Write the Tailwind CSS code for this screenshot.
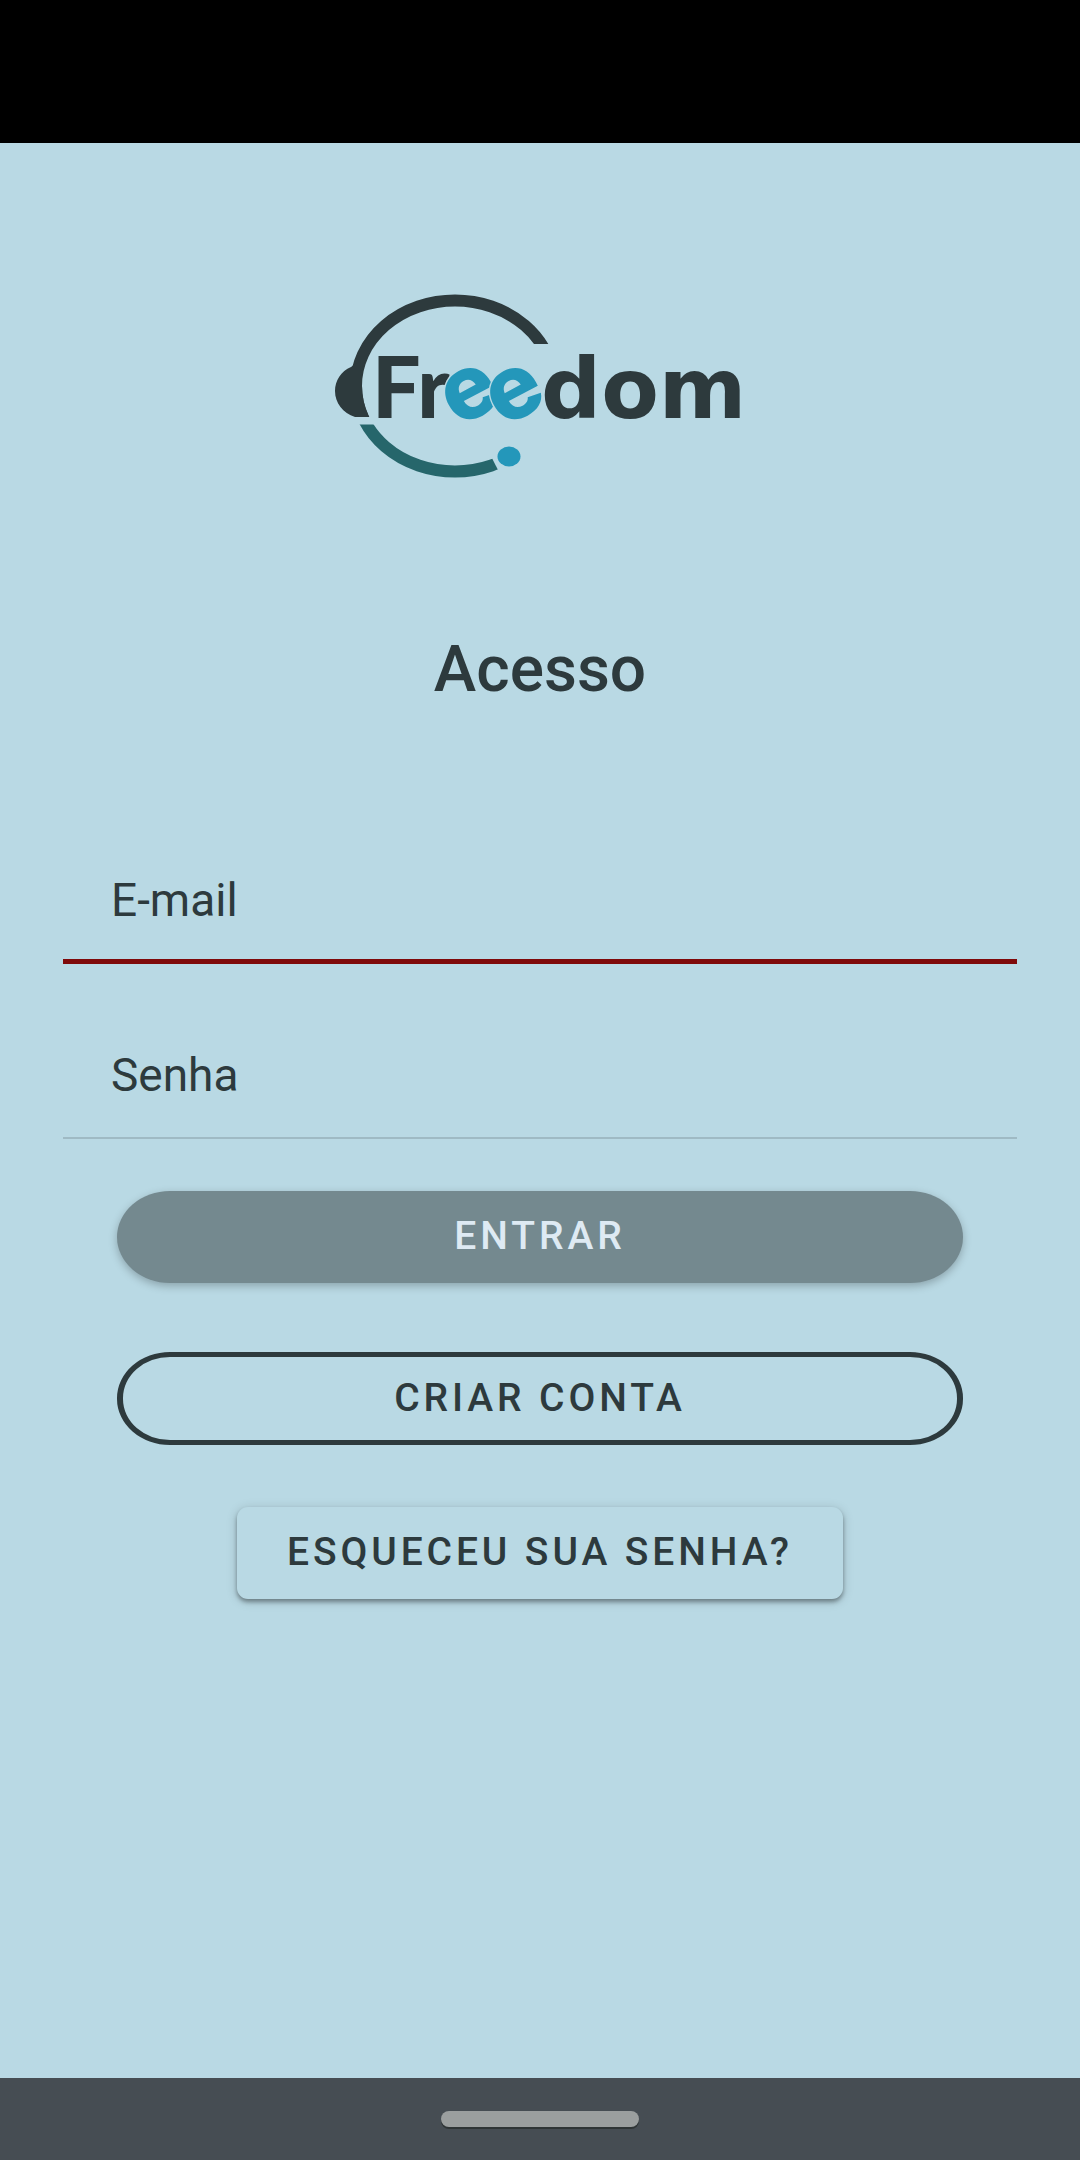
<!DOCTYPE html>
<html lang="pt-BR">
<head>
  <meta charset="UTF-8" />
  <meta name="viewport" content="width=device-width, initial-scale=1.0"/>
  <title>Freedom - Acesso</title>
  <script src="https://cdn.jsdelivr.net/npm/@tailwindcss/browser@4"></script>
</head>
<body class="min-h-screen flex flex-col bg-[#b9d9e4] text-[#2d3a3d] font-['Roboto',sans-serif]">
  <!-- Status bar -->
  <div class="h-[143px] shrink-0 bg-black"></div>

  <main class="flex-1 flex flex-col items-center px-[63px] pt-[151px]">
    <svg class="w-[412px] h-[184px]" viewBox="334 294 412 184" role="img" aria-label="Freedom">
      <clipPath id="band"><path d="M334 290H560V344H455V417H334Z"/></clipPath>
      <clipPath id="mic"><path d="M334 424.500H475L499 472V480H334Z"/></clipPath>
      <!-- Headset -->
      <ellipse cx="455" cy="386" rx="99" ry="85.500" fill="none" stroke="#2d3a3d" stroke-width="12" clip-path="url(#band)"/>
      <ellipse cx="455" cy="386" rx="99" ry="85.500" fill="none" stroke="#26666b" stroke-width="12" clip-path="url(#mic)"/>
      <path fill="#2d3a3d" d="M351 367C341 371 335 381 335 391C335 403 343 413 355 417H369Q362 402 362 386L360 360Z"/>
      <ellipse cx="509" cy="456.500" rx="11.500" ry="10" fill="#2497ba"/>
      <!-- Wordmark -->
      <g font-family="Inter, sans-serif" font-weight="800" fill="#2d3a3d">
        <text x="372" y="418" font-family="Lato, sans-serif" font-weight="900" font-size="86">Fr</text>
        <g font-size="90" fill="#2497ba" stroke="#b9d9e4" stroke-width="3" paint-order="stroke" text-anchor="middle">
          <text x="470" y="418" transform="rotate(-28 470 394)">e</text>
          <text x="515" y="418" transform="rotate(-28 515 394)">e</text>
        </g>
        <text x="541" y="418" font-family="DejaVu Sans, sans-serif" font-weight="700" font-size="84">dom</text>
      </g>
    </svg>

    <h1 class="mt-[152px] text-[64px] leading-[80px] font-medium">Acesso</h1>

    <form class="w-full mt-[126px] flex flex-col" onsubmit="return false">
      <div class="flex items-center h-[128px] px-12 pt-1 border-b-5 border-[#7f0a0a]">
        <label for="email" class="text-[46px] leading-[56px]">E-mail</label>
        <input type="email" id="email" class="flex-1 min-w-0 h-full ml-4 text-[46px] outline-none">
      </div>
      <div class="flex items-center h-[128px] mt-[47px] px-12 pt-px border-b-2 border-[#9fbac4]">
        <label for="senha" class="text-[46px] leading-[56px]">Senha</label>
        <input type="password" id="senha" class="flex-1 min-w-0 h-full ml-4 text-[46px] outline-none">
      </div>

      <div class="flex flex-col items-center px-[54px] pt-[52px]">
        <button type="submit" class="w-full h-[92px] pb-0.5 rounded-[53px/46px] bg-[#74898f] text-[#deeaf3] text-[39px] leading-[48px] font-medium tracking-widest shadow-[0_3px_8px_rgba(0,0,0,0.25)]">ENTRAR</button>
        <button type="button" class="w-full h-[93px] mt-[69px] pb-0.5 rounded-[53px/46px] border-x-6 border-y-5 border-[#2d3a3d] text-[39px] leading-[48px] font-medium tracking-widest">CRIAR CONTA</button>
        <button type="button" class="h-[92px] mt-[62px] pb-0.5 px-[50px] rounded-[11px] bg-[#b9d9e4] text-[39px] leading-[48px] font-medium tracking-widest shadow-[0_3px_4px_rgba(0,0,0,0.35),0_2px_12px_rgba(0,0,0,0.16)]">ESQUECEU SUA SENHA?</button>
      </div>
    </form>
  </main>

  <!-- Gesture bar -->
  <div class="h-[82px] shrink-0 flex justify-center items-center bg-[#464d53]">
    <div class="w-[198px] h-4 rounded-full bg-[#9b9f9f] shadow-[0_2px_0_#2f3536]"></div>
  </div>
</body>
</html>
